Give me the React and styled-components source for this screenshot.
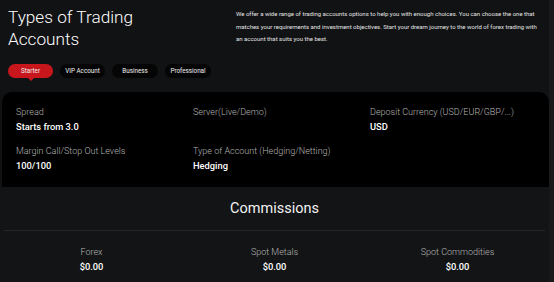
import React, { useState } from "react";
import styled, { createGlobalStyle } from "styled-components";

const GlobalStyle = createGlobalStyle`
  body {
    margin: 0;
    background: #111214;
    font-family: Roboto, "Noto Sans", Arial, sans-serif;
    color: #fff;
  }
`;

const Page = styled.div`
  width: 554px;
  height: 282px;
  overflow: hidden;
  background: #111214;
  display: flex;
`;

const Main = styled.div`
  width: 549px;
  display: flex;
  flex-direction: column;
`;

const Gutter = styled.div`
  flex: 1;
  background: #18191b;
`;

const Header = styled.div`
  display: flex;
  padding: 5px 8px 0 8px;
  height: 54px;
`;

const Title = styled.h1`
  margin: 0;
  width: 228px;
  font-size: 17.2px;
  line-height: 22px;
  font-weight: 300;
  padding-top: 1px;
`;

const Intro = styled.p`
  margin: 3px 0 0;
  width: 302px;
  font-size: 6px;
  line-height: 12.5px;
  color: #e4e4e4;
`;

const Tabs = styled.div`
  display: flex;
  gap: 7px;
  padding: 5px 8px 0;
  height: 28px;
`;

const Tab = styled.button`
  position: relative;
  height: 14px;
  width: ${(p) => p.$w}px;
  border: none;
  border-radius: 7px;
  padding: 0;
  font-family: inherit;
  font-size: 6.3px;
  font-weight: 400;
  color: #f0f0f0;
  background: ${(p) => (p.$active ? "#c8161d" : "#050505")};
  cursor: pointer;

  &::after {
    content: "";
    display: ${(p) => (p.$active ? "block" : "none")};
    position: absolute;
    left: 50%;
    bottom: -3px;
    margin-left: -3px;
    border-left: 3px solid transparent;
    border-right: 3px solid transparent;
    border-top: 3px solid #c8161d;
  }
`;

const Card = styled.div`
  margin: 0 0 0 2px;
  background: #000;
  border-radius: 10px 10px 0 0;
  height: 95px;
  display: grid;
  grid-template-columns: 177px 177px 1fr;
  grid-auto-rows: 39px;
  padding: 14px 0 0 14px;
  box-sizing: border-box;
`;

const Spec = styled.div`
  display: flex;
  flex-direction: column;
  gap: 3px;
`;

const Label = styled.span`
  font-size: 9px;
  line-height: 12px;
  font-weight: 300;
  color: #b4b4b4;
`;

const Value = styled.span`
  font-size: 9.3px;
  line-height: 12px;
  font-weight: 500;
  color: #fff;
`;

const Commissions = styled.div`
  flex: 1;
  background: #131416;
`;

const SectionTitle = styled.h2`
  margin: 0;
  text-align: center;
  font-size: 14.5px;
  font-weight: 400;
  line-height: 18px;
  padding-top: 13px;
  height: 30px;
  box-sizing: content-box;
  color: #f2f2f2;
`;

const Divider = styled.hr`
  margin: 0 4px;
  border: none;
  border-top: 1px solid #25262a;
`;

const FeeRow = styled.div`
  display: grid;
  grid-template-columns: repeat(3, 1fr);
  padding: 15px 0 0 0;
`;

const Fee = styled.div`
  display: flex;
  flex-direction: column;
  align-items: center;
  gap: 3px;
`;

const tabs = [
  { name: "Starter", w: 45 },
  { name: "VIP Account", w: 45 },
  { name: "Business", w: 46 },
  { name: "Professional", w: 46 },
];

const specs = [
  ["Spread", "Starts from 3.0"],
  ["Server(Live/Demo)", ""],
  ["Deposit Currency (USD/EUR/GBP/...)", "USD"],
  ["Margin Call/Stop Out Levels", "100/100"],
  ["Type of Account (Hedging/Netting)", "Hedging"],
];

const fees = [
  ["Forex", "$0.00"],
  ["Spot Metals", "$0.00"],
  ["Spot Commodities", "$0.00"],
];

export default function App() {
  const [active, setActive] = useState("Starter");
  return (
    <Page>
      <GlobalStyle />
      <Main>
        <Header>
          <Title>
            Types of Trading
            <br />
            Accounts
          </Title>
          <Intro>
            We offer a wide range of trading accounts options to help you with enough choices. You can choose the one that
            matches your requirements and investment objectives. Start your dream journey to the world of forex trading with
            an account that suits you the best.
          </Intro>
        </Header>
        <Tabs>
          {tabs.map((t) => (
            <Tab key={t.name} $w={t.w} $active={active === t.name} onClick={() => setActive(t.name)}>
              {t.name}
            </Tab>
          ))}
        </Tabs>
        <Card>
          {specs.map(([label, value]) => (
            <Spec key={label}>
              <Label>{label}</Label>
              <Value>{value}</Value>
            </Spec>
          ))}
        </Card>
        <Commissions>
          <SectionTitle>Commissions</SectionTitle>
          <Divider />
          <FeeRow>
            {fees.map(([label, value]) => (
              <Fee key={label}>
                <Label>{label}</Label>
                <Value>{value}</Value>
              </Fee>
            ))}
          </FeeRow>
        </Commissions>
      </Main>
      <Gutter />
    </Page>
  );
}
